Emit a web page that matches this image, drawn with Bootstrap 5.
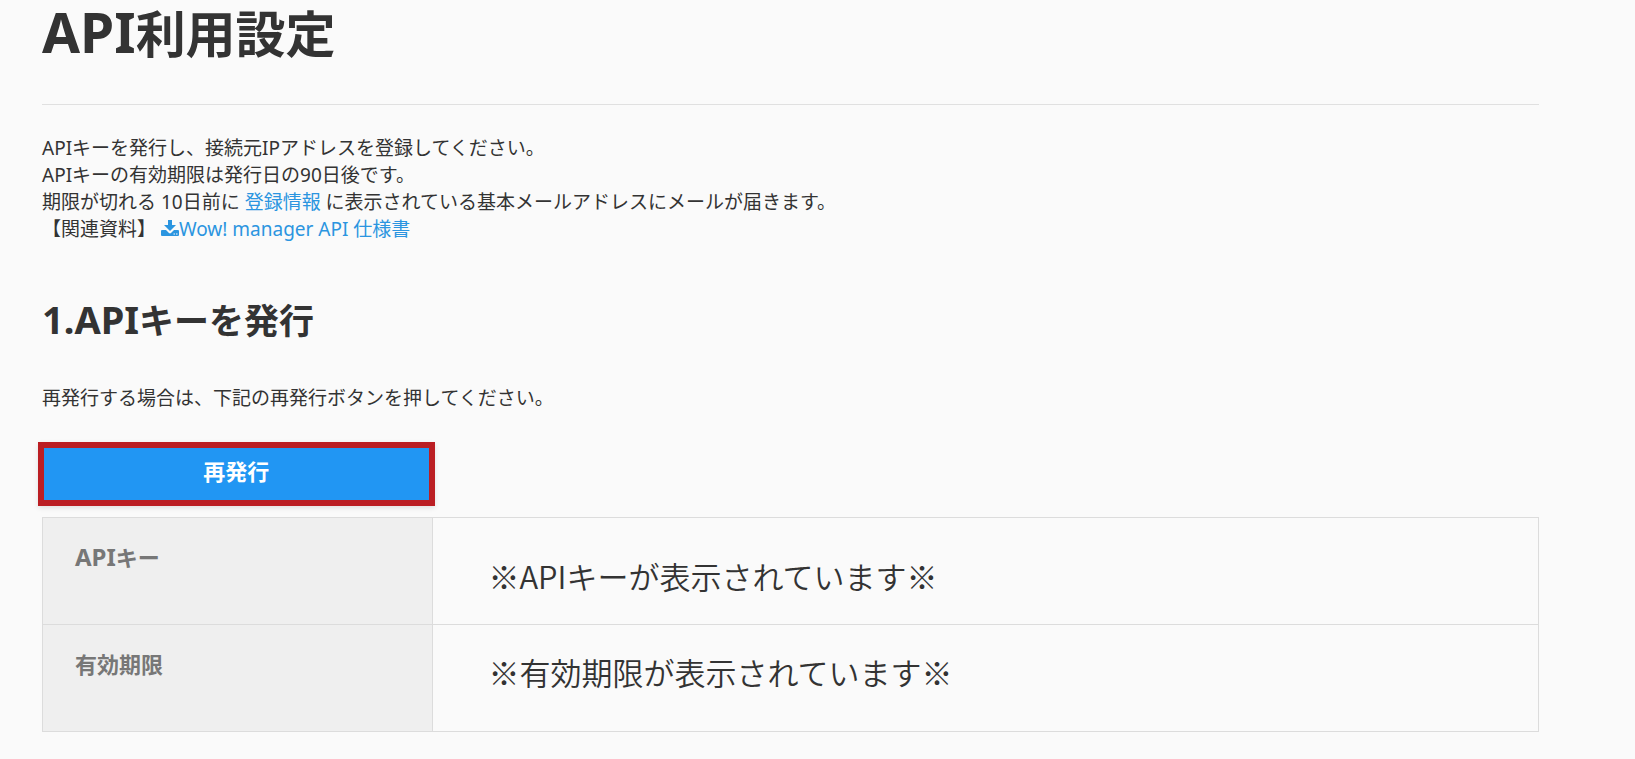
<!DOCTYPE html>
<html lang="ja">
<head>
<meta charset="utf-8">
<meta name="viewport" content="width=device-width, initial-scale=1">
<title>API利用設定</title>
<link href="https://cdn.jsdelivr.net/npm/bootstrap@5.3.0/dist/css/bootstrap.min.css" rel="stylesheet">
<style>
body { background: #fafafa; color: #333; font-family: "Noto Sans", "Noto Sans CJK JP", sans-serif; font-size: 19px; line-height: 27px; }
a { color: #2b95e0; text-decoration: none; }
.page { padding: 0 96px 24px 42px; }
.page-title { font-size: 50px; line-height: 68px; padding-bottom: 36px; border-bottom: 1px solid #e0e0e0; }
.section-title { font-size: 35px; line-height: 44px; margin: 56px 0 42px; }
/* Latin letters are set slightly larger than the kana and kanji beside them */
.latin { line-height: 1; }
.page-title .latin { font-size: 55px; }
.section-title .latin { font-size: 38px; }
.keys .latin { font-size: 24px; }
.intro { margin-top: 30px; }
.icon { width: 18px; height: 18px; vertical-align: -1px; }
.reissue { width: 26.5%; margin: 30px 0 11px -4px; height: 64px; background: #2196f3; border: 6px solid #bb1e23; border-radius: 0; color: #fff; font-size: 22px; line-height: 30px; padding: 0 0 6px; box-shadow: 0 2px 5px rgba(0,0,0,.1); }
.reissue:hover { background: #1e88e5; border-color: #bb1e23; color: #fff; }
.keys { border: 1px solid #dcdcdc; color: #333; --bs-table-bg: transparent; }
.keys tr { height: 107px; }
.keys th, .keys td { border: 1px solid #dcdcdc; vertical-align: top; }
.keys th { width: 26.1%; background: #efefef; color: #777; font-size: 22px; line-height: 30px; padding: 24px 32px; }
.keys td { font-family: "Noto Sans CJK JP", sans-serif; font-weight: 350; font-size: 31px; line-height: 44px; padding: 25px 55px; }
.keys tr:first-child td { padding-top: 36px; padding-bottom: 24px; }
</style>
</head>
<body>
<main class="page">
  <h1 class="page-title fw-bold mb-0"><span class="latin">API</span>利用設定</h1>
  <p class="intro mb-0">APIキーを発行し、接続元IPアドレスを登録してください。<br>
  APIキーの有効期限は発行日の90日後です。<br>
  期限が切れる 10日前に <a href="#">登録情報</a> に表示されている基本メールアドレスにメールが届きます。<br>
  【関連資料】 <a href="#"><svg class="icon" viewBox="0 0 18 18" fill="currentColor" aria-hidden="true"><path d="M7 1h4v5h4L9 12 3 6h4zM1 11h4l3 3q1 .8 2 0l3-3h4q1 0 1 1v4q0 1-1 1H1q-1 0-1-1v-4q0-1 1-1zm11.500 3.500v1H14v-1zm2.500 0v1h1.500v-1z" fill-rule="evenodd"/></svg>Wow! manager API 仕様書</a></p>

  <h2 class="section-title fw-bold"><span class="latin">1.API</span>キーを発行</h2>
  <p class="mb-0">再発行する場合は、下記の再発行ボタンを押してください。</p>
  <button type="button" class="btn reissue d-block fw-bold">再発行</button>

  <table class="table keys mb-0">
    <tbody>
      <tr><th scope="row"><span class="latin">API</span>キー</th><td>※APIキーが表示されています※</td></tr>
      <tr><th scope="row">有効期限</th><td>※有効期限が表示されています※</td></tr>
    </tbody>
  </table>
</main>
<script src="https://cdn.jsdelivr.net/npm/bootstrap@5.3.0/dist/js/bootstrap.bundle.min.js"></script>
</body>
</html>
